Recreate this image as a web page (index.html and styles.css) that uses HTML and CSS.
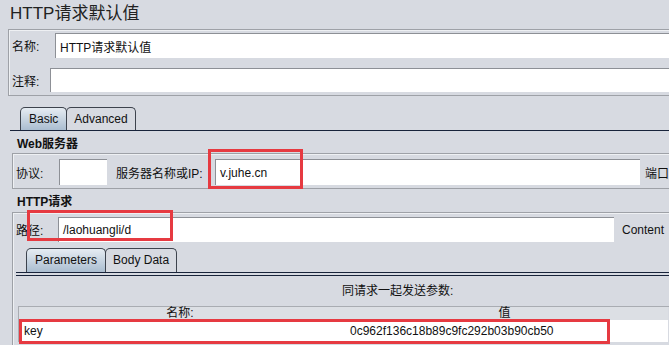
FILE: index.html
```html
<!DOCTYPE html>
<html lang="zh">
<head>
    <meta charset="UTF-8">
    <title>HTTP请求默认值</title>
    <link rel="stylesheet" href="styles.css">
</head>
<body>
    <div class="title">HTTP请求默认值</div>

    <div class="name-panel">
        <div class="form-row name-row">
            <span class="label name-label">名称:</span>
            <div class="field grow">HTTP请求默认值</div>
        </div>
        <div class="form-row comment-row">
            <span class="label comment-label">注释:</span>
            <div class="field grow"></div>
        </div>
    </div>

    <div class="tabs main-tabs">
        <span class="tab active">Basic</span>
        <span class="tab">Advanced</span>
    </div>
    <div class="tab-line"></div>

    <div class="group-title">Web服务器</div>
    <div class="panel server-panel">
        <div class="form-row server-row">
            <span class="label proto-label">协议:</span>
            <div class="field proto"></div>
            <span class="label host-label">服务器名称或IP:</span>
            <div class="field host">v.juhe.cn</div>
            <span class="label port-label">端口</span>
        </div>
    </div>

    <div class="group-title http-title">HTTP请求</div>
    <div class="panel http-panel">
        <div class="form-row path-row">
            <span class="label path-label">路径:</span>
            <div class="field path">/laohuangli/d</div>
            <span class="label content-label">Content</span>
        </div>

        <div class="tabs sub-tabs">
            <span class="tab active">Parameters</span>
            <span class="tab">Body Data</span>
        </div>
        <div class="sub-line"></div>

        <div class="params-caption">同请求一起发送参数:</div>
        <div class="params-table">
            <div class="th">名称:</div>
            <div class="th">值</div>
            <div class="td key-cell">key</div>
            <div class="td value-cell">0c962f136c18b89c9fc292b03b90cb50</div>
        </div>
    </div>

    <!-- annotation boxes drawn over the screenshot -->
    <div class="mark mark-host"></div>
    <div class="mark mark-path"></div>
    <div class="mark mark-row"></div>
</body>
</html>
```

FILE: styles.css
```css
body {
    margin: 0;
    width: 669px;
    height: 345px;
    overflow: hidden;
    position: relative;
    background-color: #d7dae1;
    font-family: "Liberation Sans", "Noto Sans CJK SC", sans-serif;
    font-size: 12px;
    color: #111;
}
.title {
    height: 29px;
    padding-left: 10px;
    font-size: 17px;
    line-height: 27px;
    color: #222;
    white-space: nowrap;
}
.name-panel {
    margin-left: 8px;
    padding: 3px 0 3px 3px;
    border: 1px solid #9ea1a7;
    border-right: none;
    box-shadow: inset 1px 1px 0 #eef0f3;
}
.form-row {
    display: flex;
    align-items: center;
    white-space: nowrap;
}
.label {
    flex: 0 0 auto;
}
.field {
    box-sizing: border-box;
    height: 100%;
    padding-left: 4px;
    display: flex;
    align-items: center;
    background-color: #fff;
    border-top: 1px solid #8d9096;
    border-left: 1px solid #8d9096;
    flex: 0 0 auto;
}
.grow {
    flex: 1 1 auto;
}
.name-row {
    height: 25px;
    margin-bottom: 10px;
}
.comment-row {
    height: 24px;
}
.name-label {
    width: 43px;
}
.comment-label {
    width: 38px;
}
.tabs {
    display: flex;
    white-space: nowrap;
}
.main-tabs {
    height: 23px;
    padding: 11px 0 0 20px;
}
.tab {
    box-sizing: border-box;
    height: 100%;
    padding: 0 7px;
    border: 1px solid #3d434d;
    border-bottom: none;
    border-radius: 5px 5px 0 0;
    line-height: 22px;
    color: #111;
}
.tab:first-child {
    padding: 0 8px;
}
.tab + .tab {
    margin-left: -1px;
}
.tab.active {
    background: linear-gradient(#e6ecf2, #aabdd0);
}
.tab-line {
    margin-left: 10px;
    border-top: 1px solid #18233a;
}
.group-title {
    height: 18px;
    padding: 4px 0 0 17px;
    line-height: 18px;
    font-weight: bold;
    white-space: nowrap;
}
.http-title {
    height: 19px;
}
.panel {
    margin-left: 12px;
    border: 1px solid #9ea1a7;
    border-right: none;
    padding-left: 3px;
    box-shadow: inset 1px 1px 0 #eef0f3;
}
.server-panel {
    padding-top: 5px;
    padding-bottom: 3px;
}
.server-row {
    height: 26px;
}
.proto-label {
    width: 43px;
}
.proto {
    width: 48px;
}
.host-label {
    width: 99px;
    margin-left: 9px;
}
.host {
    width: 425px;
}
.port-label {
    margin-left: 5px;
}
.http-panel {
    padding-top: 4px;
    border-bottom: none;
    height: 128px;
}
.path-row {
    height: 25px;
}
.path-label {
    width: 42px;
}
.path {
    width: 556px;
}
.content-label {
    margin-left: 8px;
}
.sub-tabs {
    height: 24px;
    margin-top: 6px;
    padding-left: 10px;
}
.sub-tabs .tab {
    line-height: 23px;
}
.sub-line {
    height: 2px;
    border-top: 1px solid #18233a;
    border-bottom: 1px solid #18233a;
}
.params-caption {
    height: 30px;
    padding-left: 326px;
    line-height: 30px;
    white-space: nowrap;
}
.params-table {
    display: grid;
    grid-template-columns: 322px 327px;
    grid-template-rows: 13px 22px;
    margin-left: 2px;
    border-top: 1px solid #a9acb2;
    border-left: 1px solid #a9acb2;
}
.th {
    text-align: center;
    line-height: 13px;
    background-color: #dcdfe4;
}
.td {
    background-color: #fff;
    line-height: 22px;
    white-space: nowrap;
}
.key-cell {
    padding-left: 5px;
}
.value-cell {
    padding-left: 9px;
}
.mark {
    position: absolute;
    box-sizing: border-box;
    border: 3px solid #e63a41;
}
.mark-host {
    left: 208px;
    top: 149px;
    width: 95px;
    height: 40px;
}
.mark-path {
    left: 27px;
    top: 210px;
    width: 146px;
    height: 31px;
}
.mark-row {
    left: 19px;
    top: 319px;
    width: 591px;
    height: 25px;
}
```
